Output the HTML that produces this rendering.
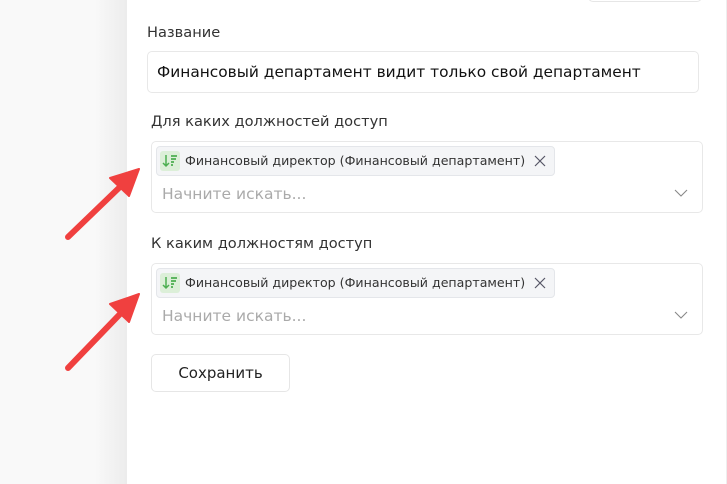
<!DOCTYPE html>
<html><head><meta charset="utf-8"><style>
*{box-sizing:border-box;margin:0;padding:0}
body{width:727px;height:484px;overflow:hidden;background:#f9f9f9;font-family:"DejaVu Sans","Liberation Sans",sans-serif;position:relative}
.shadow{position:absolute;left:95px;top:0;width:32px;height:484px;background:linear-gradient(to right,#f9f9f9,#ececec)}
.panel{position:absolute;left:127px;top:0;width:599px;height:484px;background:#fff}
.rgray{position:absolute;left:726px;top:0;width:1px;height:484px;background:#eee}
.topbox{position:absolute;left:588px;top:-10px;width:114px;height:12px;border:1px solid #e6e6e6;border-radius:5px}
.lbl{position:absolute;font-size:14.6px;color:#333}
.inp{position:absolute;border:1px solid #e8e8e8;border-radius:5px;background:#fff}
.chip{position:absolute;left:4px;top:4px;width:399px;height:30px;background:#f4f5f7;border:1px solid #e4e6ea;border-radius:4px;font-size:12.6px;color:#333;padding-left:28px;line-height:28px}
.ic{position:absolute;left:3px;top:4px;width:20px;height:20px;background:#dcefd8;border-radius:3px}
.x{position:absolute;right:8px;top:8px}
.ph{position:absolute;left:10px;top:43px;font-size:15.5px;color:#aaa}
.chev{position:absolute;right:14px;top:47px}
.btn{position:absolute;left:151px;top:354px;width:139px;height:38px;border:1px solid #e6e6e6;border-radius:5px;font-size:15px;color:#222;text-align:center;line-height:36px}
</style></head><body>
<div class="shadow"></div><div class="panel"></div><div class="rgray"></div>
<div class="topbox"></div>
<div class="lbl" style="left:147px;top:24px">Название</div>
<div class="inp" style="left:147px;top:51px;width:552px;height:42px;font-size:15.4px;color:#111;padding-left:9px;line-height:40px">Финансовый департамент видит только свой департамент</div>
<div class="lbl" style="left:151px;top:113px">Для каких должностей доступ</div>
<div class="inp" style="left:151px;top:141px;width:552px;height:72px">
<div class="chip"><div class="ic"><svg width="20" height="20"><path d="M6 4v11M3 12l3 3 3-3" stroke="#4caf50" stroke-width="1.5" fill="none"/><path d="M11 5h6M11 8h5M11 11h3M11 14h2" stroke="#4caf50" stroke-width="1.8"/></svg></div>Финансовый директор (Финансовый департамент)<svg class="x" width="12" height="12"><path d="M1 1l10 10M11 1L1 11" stroke="#556" stroke-width="1.2"/></svg></div>
<div class="ph">Начните искать...</div>
<svg class="chev" width="14" height="8"><path d="M1 1l6 6 6-6" stroke="#888" stroke-width="1.1" fill="none"/></svg></div>
<div class="lbl" style="left:151px;top:235px">К каким должностям доступ</div>
<div class="inp" style="left:151px;top:263px;width:552px;height:72px">
<div class="chip"><div class="ic"><svg width="20" height="20"><path d="M6 4v11M3 12l3 3 3-3" stroke="#4caf50" stroke-width="1.5" fill="none"/><path d="M11 5h6M11 8h5M11 11h3M11 14h2" stroke="#4caf50" stroke-width="1.8"/></svg></div>Финансовый директор (Финансовый департамент)<svg class="x" width="12" height="12"><path d="M1 1l10 10M11 1L1 11" stroke="#556" stroke-width="1.2"/></svg></div>
<div class="ph">Начните искать...</div>
<svg class="chev" width="14" height="8"><path d="M1 1l6 6 6-6" stroke="#888" stroke-width="1.1" fill="none"/></svg></div>
<div class="btn">Сохранить</div>
<svg style="position:absolute;left:0;top:0" width="727" height="484">
<g fill="#f0403f" stroke="#f0403f" stroke-linecap="round" stroke-linejoin="round">
<line x1="68" y1="237" x2="122" y2="185" stroke-width="6"/>
<polygon points="139,169 110,178 129,196" stroke-width="2"/>
<line x1="68" y1="368" x2="122" y2="312" stroke-width="6"/>
<polygon points="139,294 110,304 129,322" stroke-width="2"/>
</g></svg>
</body></html>
